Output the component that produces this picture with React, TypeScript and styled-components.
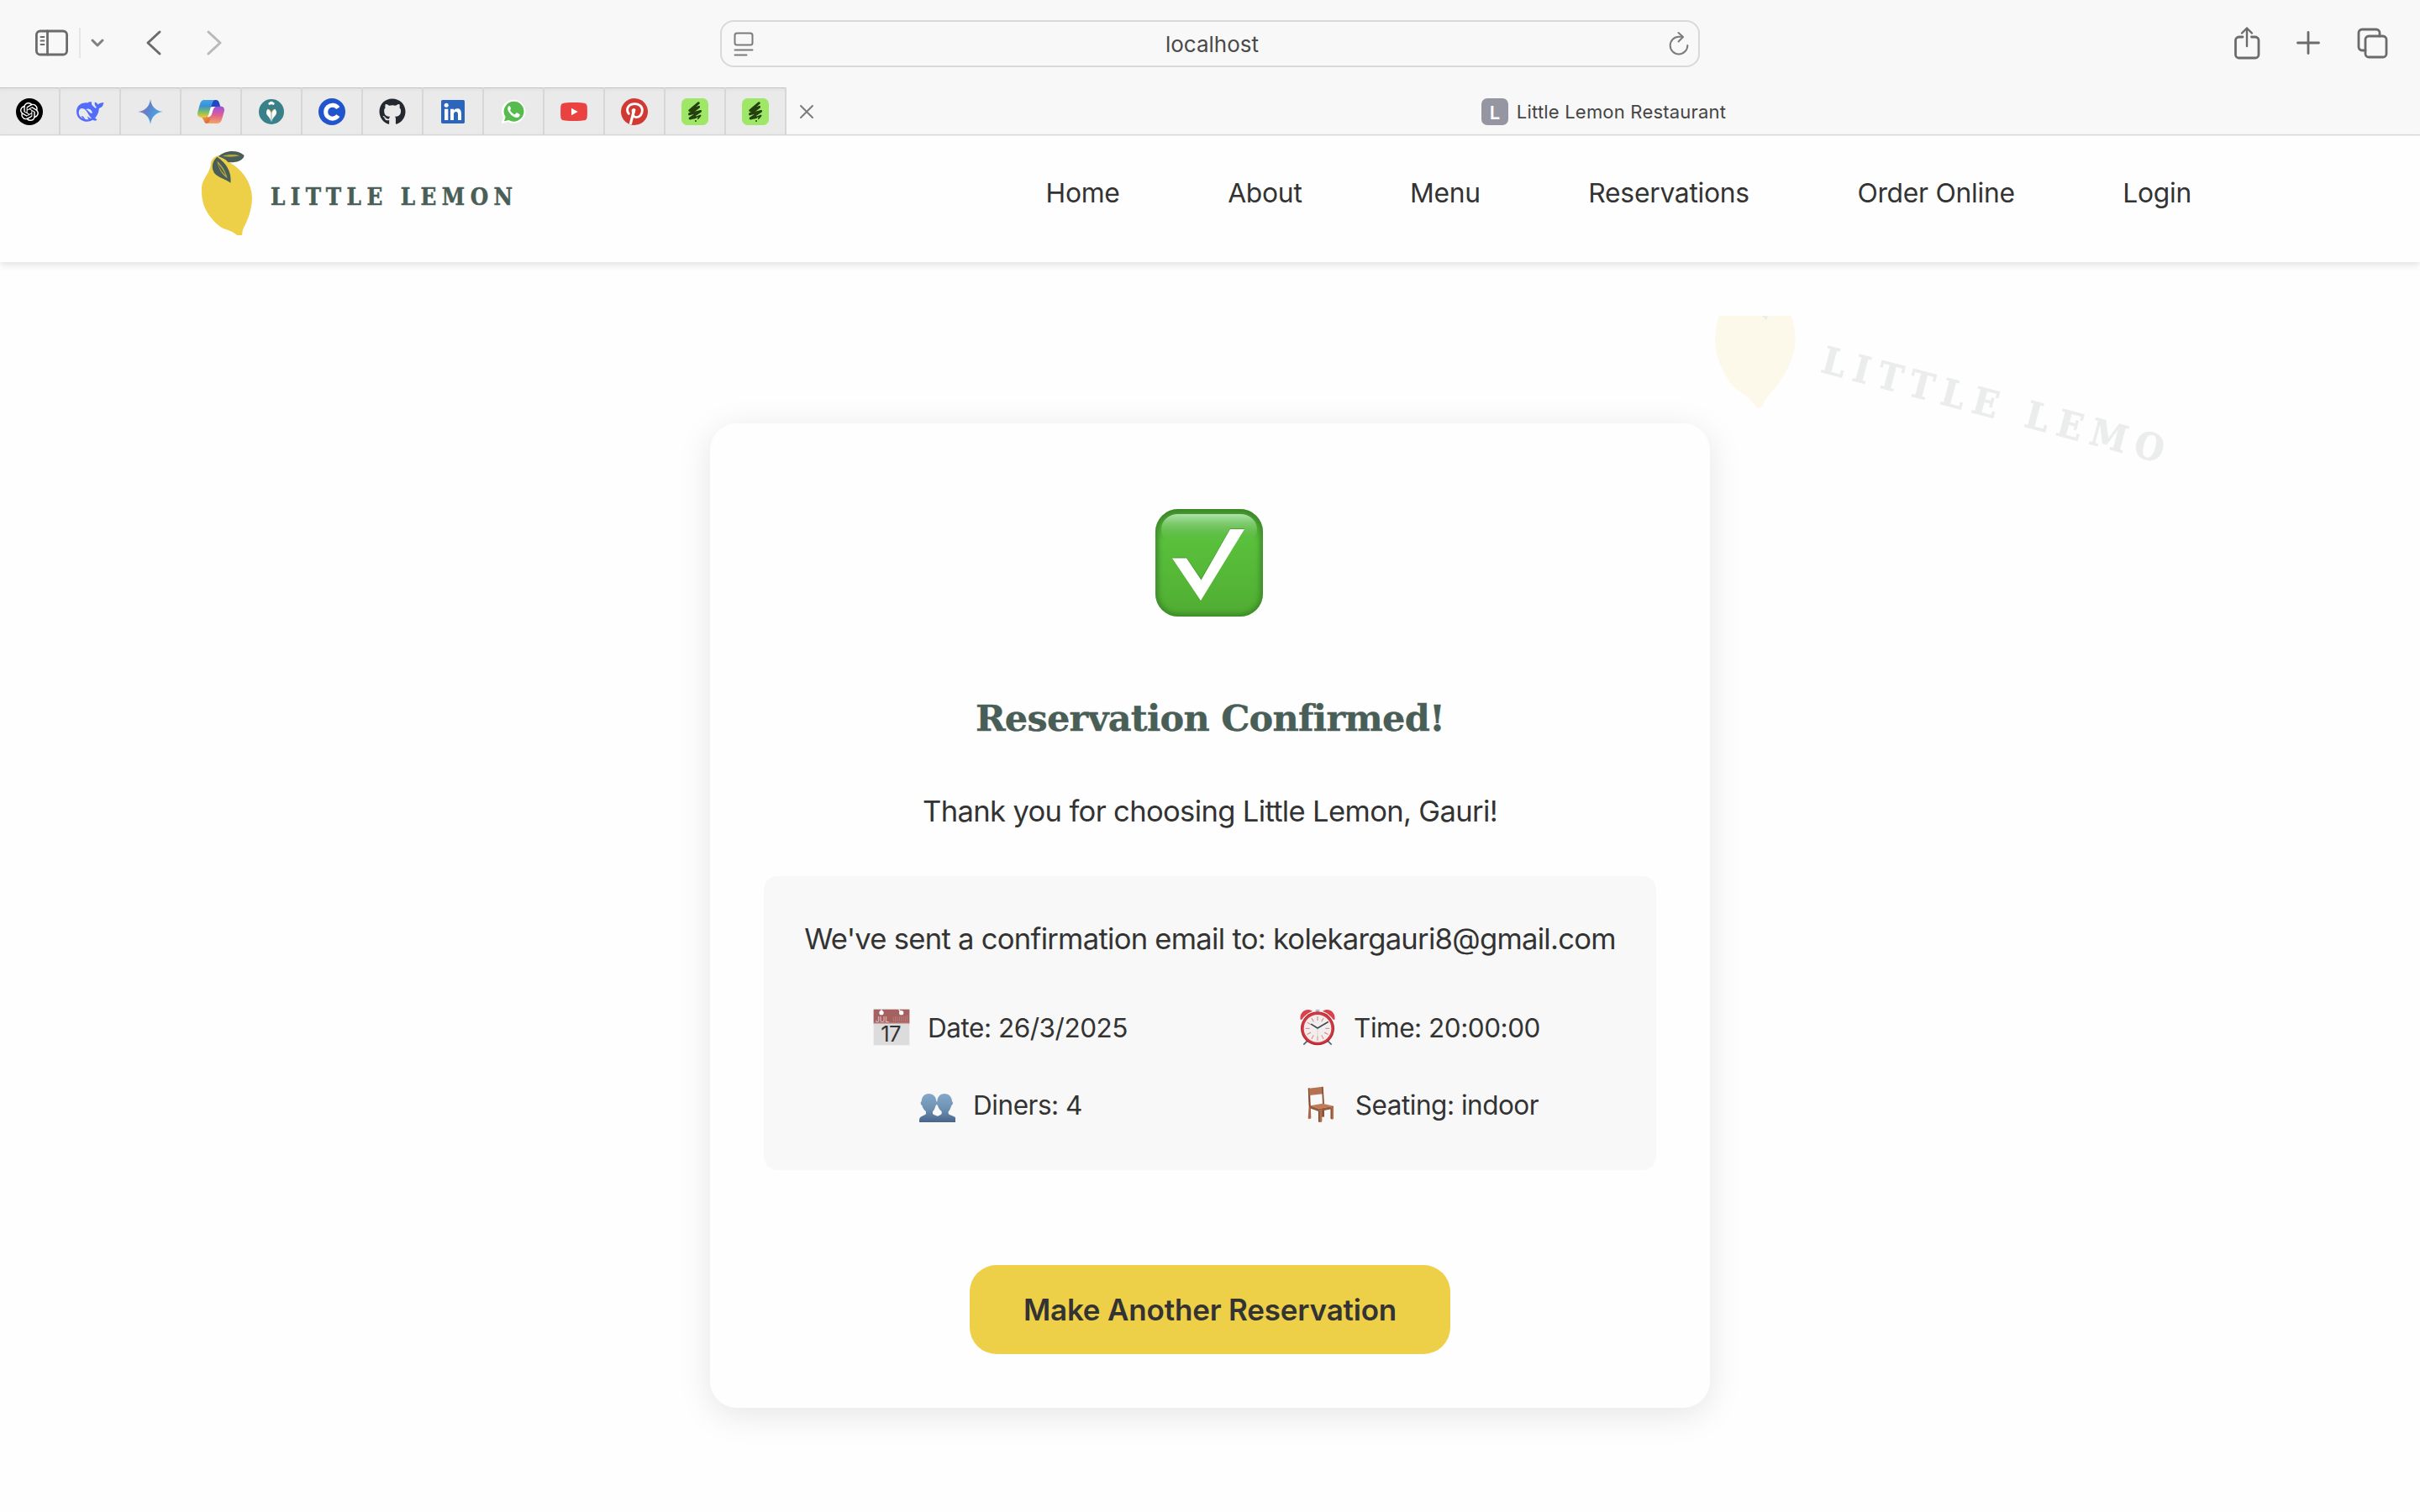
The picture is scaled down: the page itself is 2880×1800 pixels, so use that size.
import React from "react";
import styled, { createGlobalStyle } from "styled-components";
import { SiOpenai } from "react-icons/si";
import { FaGithub } from "react-icons/fa";

const sans = `Inter, "Liberation Sans", sans-serif`;
const serif = `"DejaVu Serif", serif`;
const serifCondensed = `"DejaVu Serif Condensed", "DejaVu Serif", serif`;
const yellow = "#edcf48";
const green = "#495e57";

const GlobalStyle = createGlobalStyle`
  *, *::before, *::after { box-sizing: border-box; }
  body { margin: 0; background: #fefefe; font-family: ${sans}; color: #333; }
  svg { display: block; flex: none; }
`;

const Window = styled.div`
  width: 2880px;
  height: 1800px;
  overflow: hidden;
  display: flex;
  flex-direction: column;
`;

/* ---------- browser chrome ---------- */

const Toolbar = styled.div`
  flex: none;
  height: 104px;
  padding: 0 38px;
  background: #f8f8f8;
  display: grid;
  grid-template-columns: 1fr 1166px 1fr;
`;

const ToolGroup = styled.div<{ $end?: boolean }>`
  height: 102px;
  display: flex;
  align-items: center;
  justify-content: ${(p) => (p.$end ? "flex-end" : "flex-start")};
`;

const ToolIcon = styled.svg<{ $gap?: number; $tone?: string }>`
  flex: none;
  margin-left: ${(p) => p.$gap ?? 0}px;
  fill: none;
  stroke: ${(p) => p.$tone ?? "#6b6b6b"};
  stroke-width: 2.8;
  stroke-linecap: round;
  stroke-linejoin: round;
`;

const Divider = styled.div`
  width: 2px;
  height: 36px;
  margin-left: 12px;
  background: #e6e6e6;
`;

const AddressBar = styled.div`
  height: 56px;
  margin-top: 24px;
  padding: 0 10px 0 13px;
  border: 2px solid #d9d9d9;
  border-radius: 16px;
  display: flex;
  align-items: center;
  justify-content: space-between;
`;

const Address = styled.span`
  padding: 2px 0 0 2px;
  font-size: 26px;
  line-height: 52px;
  color: #4a4a4a;
`;

const TabStrip = styled.div`
  flex: none;
  height: 57px;
  display: flex;
  background: #f8f8f8;
  border-bottom: 1px solid #d8d8d8;
`;

const PinnedTab = styled.div`
  width: 72px;
  padding-top: 1px;
  border-right: 2px solid #d7d7d7;
  background: #eaeaea;
  box-shadow: inset 0 1px 0 #c6c6c6, inset 0 5px 4px -3px #dadada;
  display: flex;
  align-items: center;
  justify-content: center;
`;

const ActiveTab = styled.div`
  position: relative;
  flex: 1;
  padding: 2px 0 0 1px;
  display: flex;
  align-items: center;
  justify-content: center;
  gap: 10px;
`;

const CloseMark = styled.svg`
  position: absolute;
  left: 15px;
  top: 20px;
  stroke: #7c7c7c;
  stroke-width: 2;
  stroke-linecap: round;
`;

const Favicon = styled.span`
  width: 32px;
  height: 32px;
  border-radius: 7px;
  background: #9596a2;
  color: #fff;
  font-size: 22px;
  font-weight: 600;
  line-height: 34px;
  text-align: center;
`;

const TabTitle = styled.span`
  font-size: 22px;
  letter-spacing: 0.2px;
  color: #454545;
`;

const RoundBadge = styled.span`
  width: 32px;
  height: 32px;
  border-radius: 50%;
  background: #000;
  color: #fff;
  display: flex;
  align-items: center;
  justify-content: center;
`;

const badges: React.ReactNode[] = [
  <RoundBadge>
    <SiOpenai size={22} />
  </RoundBadge>,
  <svg width="34" height="26" viewBox="0 0 100 74">
    <path
      fill="#536dfb"
      d="M4 28C9 12 24 4 42 6c4-5 12-4 14-3 0 4-1 7 2 11l10 10c3 1 5-1 5-4-6-3-7-9-6-17 5 1 9 4 11 9 6-5 13-6 20-7-1 11-7 19-16 20-1 16-7 26-14 34l7 6c-4 5-11 4-15 1C42 77 18 71 7 53 3 45 2 36 4 28z"
    />
    <path fill="#eaeaea" d="M11 38c1-12 9-16 18-11 12 7 16 24 27 33-5 1-9-2-14-7-1 5 2 8 4 11-18 3-36-8-35-26zM36 29c7-5 18-2 22 9 1 3-1 6-4 5-6-2-9-11-18-14z" />
    <path fill="#536dfb" d="M20 53c3-1 7 1 9 4l6 8c-7-2-12-6-15-12z" />
  </svg>,
  <svg width="30" height="30" viewBox="0 0 30 30">
    <defs>
      <linearGradient id="spark" x1="0" y1="0" x2="1" y2="0.4">
        <stop offset="0.15" stopColor="#9a6fb4" />
        <stop offset="0.5" stopColor="#5d83cc" />
        <stop offset="0.9" stopColor="#4aa6e6" />
      </linearGradient>
    </defs>
    <path fill="url(#spark)" d="M15 0c1 8.500 6 14 15 15-9 1-14 6.500-15 15-1-8.500-6-14-15-15C9 14 14 8.500 15 0z" />
  </svg>,
  <svg width="32" height="28" viewBox="0 0 96 84">
    <defs>
      <linearGradient id="cpLeft" x1="0" y1="0" x2="0" y2="1">
        <stop offset="0" stopColor="#3fa5ec" />
        <stop offset="0.35" stopColor="#3b8fd4" />
        <stop offset="0.7" stopColor="#7fbf62" />
        <stop offset="1" stopColor="#f2c63a" />
      </linearGradient>
      <linearGradient id="cpRight" x1="0" y1="0" x2="0" y2="1">
        <stop offset="0" stopColor="#9a50e0" />
        <stop offset="0.5" stopColor="#dd5f95" />
        <stop offset="1" stopColor="#f3a75c" />
      </linearGradient>
      <linearGradient id="cpFoot" x1="0" y1="0" x2="1" y2="1">
        <stop offset="0" stopColor="#f0b03c" />
        <stop offset="1" stopColor="#d8523c" />
      </linearGradient>
    </defs>
    <path fill="#2148c4" d="M48 0h18c7 0 10 4 12 11l4 13H60c-8 0-12 2-15 8z" />
    <path fill="url(#cpFoot)" d="M14 60h24l14-8-8 24c-2 6-6 8-11 8-6 0-9-5-11-12z" />
    <path fill="url(#cpLeft)" d="M24 0h42c-8 0-11 5-14 14L40 52c-3 8-7 10-13 10H12C2 62-2 54 1 43L9 14C12 5 16 0 24 0z" />
    <path fill="url(#cpRight)" d="M72 84H32c8 0 10-5 13-14l11-36c3-8 7-11 13-11h15c10 0 14 8 11 19l-8 28c-3 9-7 14-15 14z" />
    <path fill="#fff" opacity="0.92" d="M49 25h14c-4 2-6 6-8 12l-5 15c-3 7-6 9-15 10 3-2 4-5 5-9l5-18c1-5 2-8 4-10z" />
  </svg>,
  <svg width="30" height="30" viewBox="0 0 90 90">
    <circle cx="45" cy="45" r="45" fill="#398088" />
    <path fill="#fff" d="M34 17q-1-5 4-5 2-4 7-4t7 4q5 0 4 5l-3 4q-8-4-16 0zM45 52c-2-10-7-15-13-17-7 8-7 17 0 25 6 6 10 13 13 22 3-9 7-16 13-22 7-8 7-17 0-25-6 2-11 7-13 17z" />
    <path fill="#e5a23d" d="M32 35c8 0 11 5 13 13 2-8 5-13 13-13-7 4-9 9-13 14-4-5-6-10-13-14z" />
    <path stroke="#398088" strokeWidth="2" d="M45 50v30" />
  </svg>,
  <svg width="32" height="32" viewBox="0 0 96 96">
    <circle cx="48" cy="48" r="48" fill="#2155cd" />
    <path fill="none" stroke="#fff" strokeWidth="15" d="M70 35a24 24 0 1 0 0 27" />
  </svg>,
  <FaGithub size={32} color="#24292f" />,
  <svg width="28" height="28" viewBox="0 0 84 84">
    <rect width="84" height="84" rx="5" fill="#2b65bd" />
    <circle cx="18.500" cy="19" r="7.500" fill="#fff" />
    <path fill="#fff" d="M12 32h13v40H12zM33 32h12v6c3-5 7-7 13-7 11 0 14 8 14 18v23H60V52c0-6-1-10-7-10s-8 4-8 10v20H33z" />
  </svg>,
  <svg width="30" height="30" viewBox="0 0 90 90">
    <path fill="#fff" d="M46 2a42 42 0 1 1-20 79L2 88l7-23A42 42 0 0 1 46 2z" />
    <path fill="#57bb4e" d="M46 8a36 36 0 1 1-18 67l-16 4 5-15A36 36 0 0 1 46 8z" />
    <path
      fill="#fff"
      d="M34 24c-3-1-6 0-8 4-3 6-1 13 4 20 8 11 17 17 27 18 6 0 12-4 11-11 0-1-10-6-12-6s-4 6-6 6c-5-1-15-10-17-16 0-1 4-4 3-6-1-3-3-8-5-9z"
    />
  </svg>,
  <svg width="32" height="22" viewBox="0 0 96 66">
    <path fill="#ea4141" d="M12 2c20-3 52-3 72 0 7 1 10 4 11 11 1 14 1 26 0 40-1 7-4 10-11 11-20 3-52 3-72 0C5 63 2 60 1 53c-1-14-1-26 0-40C2 6 5 3 12 2z" />
    <path fill="#fff" d="M39 20v26l23-13z" />
  </svg>,
  <svg width="32" height="32" viewBox="0 0 96 96">
    <circle cx="48" cy="48" r="48" fill="#d13a32" />
    <path
      fill="none"
      stroke="#fff"
      strokeWidth="8.500"
      strokeLinecap="round"
      d="M28 55c-11-13-5-33 19-35 17-1 29 9 29 22 0 15-9 26-20 26-7 0-11-4-12-8"
    />
    <path fill="none" stroke="#fff" strokeWidth="9.500" d="M47 38c-2 14-7 28-13 55" />
    <path fill="#fff" d="M38 44c-1-8 12-10 14-3 0 5-3 11-4 16l-9-3z" />
  </svg>,
  <ScribbleIcon />,
  <ScribbleIcon />,
];

function ScribbleIcon() {
  return (
    <svg width="32" height="32" viewBox="0 0 96 96">
      <rect width="96" height="96" rx="20" fill="#9fe766" />
      <path
        fill="none"
        stroke="#24400f"
        strokeWidth="8.500"
        strokeLinecap="round"
        strokeLinejoin="round"
        d="M61 17L29 44 62 31 28 57 68 46 30 72 50 68"
      />
      <path fill="none" stroke="#24400f" strokeWidth="5" strokeLinecap="round" d="M46 70l23-9-10 12" />
      <circle cx="51" cy="81" r="3" fill="#24400f" />
    </svg>
  );
}

/* ---------- site header ---------- */

const Header = styled.header`
  position: relative;
  z-index: 2;
  flex: none;
  height: 151px;
  padding: 18px 272px 0 240px;
  border-top: 1px solid #efefef;
  background: #fefefe;
  box-shadow: 0 4px 8px rgba(0, 0, 0, 0.1);
  display: flex;
  justify-content: space-between;
  align-items: flex-start;
`;

const LogoBox = styled.div`
  flex: none;
  width: 370px;
  height: 100px;
  display: flex;
  align-items: flex-start;
`;

const LemonMark = styled.svg<{ $cropped?: boolean }>`
  overflow: ${(p) => (p.$cropped ? "hidden" : "visible")};
`;

const LogoText = styled.span`
  margin: 38px 0 0 22px;
  font: bold 27.400px/32px ${serifCondensed};
  letter-spacing: 6.500px;
  color: ${green};
  -webkit-text-stroke: 0.5px ${green};
  white-space: nowrap;
`;

const Nav = styled.nav`
  height: 99px;
  display: flex;
  align-items: center;
  gap: 128.500px;
`;

const NavLink = styled.a`
  font-size: 31.800px;
  font-weight: 440;
  letter-spacing: -0.260px;
  color: #333;
`;

function Logo({ cropped }: { cropped?: boolean }) {
  return (
    <LogoBox>
      <LemonMark $cropped={cropped} width="60" height="100" viewBox="0 0 180 300">
        <path
          fill={yellow}
          d="M62 15C42 20 32 32 32 52 26 82 2 100 0 130c-2 60 16 95 60 135 22 19 45 14 70 38 8 3 14 0 15-9 1-16 6-21 14-39 13-30 20-55 21-88-1-50-30-100-86-130z"
        />
        <path fill={green} d="M60 19C78 0 122-9 151 14c3 8-12 22-30 24-10 2-18 3-27 1-8-9-20-15-34-20z" />
        <path fill="#b5a63f" d="M74 17c18-6 42-7 62-1-18 5-42 5-62 1z" />
        <path fill={green} d="M55 20C36 38 34 60 45 78c12 15 38 21 58 35 4-32-8-66-48-93z" />
        <path fill="#b5a63f" d="M55 35c17 14 30 34 37 62-20-14-32-34-37-62z" />
        <path fill={green} d="M58 44c12 14 22 28 28 42-13-12-22-24-28-42z" />
      </LemonMark>
      <LogoText>LITTLE LEMON</LogoText>
    </LogoBox>
  );
}

/* ---------- confirmation page ---------- */

const Main = styled.main`
  position: relative;
  flex: 1;
  background: #fefefe;
  display: flex;
  justify-content: center;
  align-items: flex-start;
  padding-top: 192px;
`;

const WatermarkArea = styled.div`
  position: absolute;
  top: 64px;
  left: 300px;
  width: 2278px;
  height: 1300px;
  overflow: hidden;
  opacity: 0.1;
`;

const Watermark = styled.div`
  position: absolute;
  left: 1764px;
  top: -68px;
  transform: rotate(15deg) scale(1.62);
  transform-origin: 0 0;
`;

const Card = styled.section`
  position: relative;
  width: 1190px;
  height: 1172px;
  padding: 102px 64px 64px;
  border-radius: 32px;
  background: #fefefe;
  box-shadow: 0 8px 40px rgba(0, 0, 0, 0.1);
  display: flex;
  flex-direction: column;
  align-items: center;
`;

const CheckBox = styled.div`
  padding-right: 2px;
`;

const Title = styled.h1`
  margin: 87px 0 -1px;
  font: bold 43px/68px ${serif};
  font-variant-ligatures: none;
  letter-spacing: -0.750px;
  color: ${green};
  -webkit-text-stroke: 0.4px ${green};
`;

const Thanks = styled.p`
  margin: 47px 0 0;
  font-size: 34.600px;
  line-height: 60px;
  letter-spacing: -0.660px;
`;

const Details = styled.div`
  width: 1062px;
  height: 350px;
  margin-top: 48px;
  padding: 44px 48px 0;
  border-radius: 16px;
  background: #f8f8f8;
`;

const EmailLine = styled.p`
  margin: 0;
  font-size: 34.600px;
  line-height: 60px;
  letter-spacing: -0.720px;
  text-align: center;
  white-space: nowrap;
`;

const DetailGrid = styled.div`
  margin-top: 46px;
  display: grid;
  grid-template-columns: 1fr 1fr;
  grid-auto-rows: 60px;
  gap: 32px;
`;

const Detail = styled.div`
  display: flex;
  align-items: center;
  justify-content: center;
  gap: 21px;
  font-size: 31.500px;
  letter-spacing: -0.480px;
  white-space: nowrap;
`;

const Button = styled.button`
  width: 572px;
  height: 106px;
  margin-top: 113px;
  padding: 0;
  border: 0;
  border-radius: 32px;
  background: ${yellow};
  color: #333;
  font: 600 35px/106px ${sans};
  letter-spacing: -0.180px;
`;

function CheckEmoji() {
  return (
    <svg width="128" height="128" viewBox="0 0 128 128">
      <defs>
        <linearGradient id="ckBase" x1="0" y1="0" x2="0" y2="1">
          <stop offset="0" stopColor="#469a30" />
          <stop offset="0.3" stopColor="#59c03b" />
          <stop offset="1" stopColor="#50ad32" />
        </linearGradient>
        <linearGradient id="ckGloss" x1="0" y1="0" x2="0" y2="1">
          <stop offset="0" stopColor="#aee3ab" />
          <stop offset="1" stopColor="#59c23c" stopOpacity="0" />
        </linearGradient>
        <filter id="ckSoft" x="-10%" y="-10%" width="120%" height="120%">
          <feGaussianBlur stdDeviation="3" />
        </filter>
        <clipPath id="ckClip">
          <rect width="128" height="128" rx="27" />
        </clipPath>
      </defs>
      <g clipPath="url(#ckClip)">
        <rect width="128" height="128" fill="url(#ckBase)" />
        <rect x="0" y="0" width="128" height="128" rx="27" fill="none" stroke="#377f25" strokeWidth="6" filter="url(#ckSoft)" />
        <rect x="7" y="6" width="114" height="36" rx="20" fill="url(#ckGloss)" />
      </g>
      <path fill="#3d8a28" opacity="0.6" d="M20 57.500h17l17.500 25L89 23h17L54 108z" />
      <path fill="#fff" d="M20 58.500h17l17.500 26L89 24h17L54 109z" />
    </svg>
  );
}

function CalendarEmoji() {
  return (
    <svg width="44" height="44" viewBox="0 0 132 132">
      <rect x="2" y="2" width="128" height="128" fill="#dcdcdc" />
      <rect x="2" y="2" width="128" height="50" fill="#a56160" />
      <rect x="2" y="50" width="128" height="3" fill="#c9a9a8" />
      <circle cx="30" cy="14" r="8" fill="#fff" />
      <path stroke="#fff" strokeWidth="4" d="M30 2v10M92 2l8 11" />
      <circle cx="101" cy="14" r="8" fill="#fff" />
      <path stroke="#bd8382" strokeWidth="2.500" d="M73 46V30M80 46V27M87 46V28M94 46V25M101 46V27M108 46V24M115 46V26M122 46V22" />
      <text x="8" y="47" fontFamily={sans} fontSize="26" fill="#e6cfce" textLength="49">
        JUL
      </text>
      <text x="28" y="118" fontFamily={sans} fontSize="77" fill="#333" textLength="72">
        17
      </text>
    </svg>
  );
}

function PeopleEmoji() {
  const person =
    "M33 2c16 0 27 12 27 28 5 1 3 12-2 14-3 10-6 17-11 22v8c6 6 18 7 24 12 3 4 3 9 3 18H-1c0-9 0-14 4-18 6-5 15-6 20-12v-8C17 60 11 54 9 44 4 42 2 31 7 30 7 14 17 2 33 2z";
  return (
    <svg width="44" height="44" viewBox="0 0 132 132">
      <defs>
        <linearGradient id="ppl" x1="0" y1="0" x2="0" y2="1">
          <stop offset="0" stopColor="#83a8c9" />
          <stop offset="0.5" stopColor="#7093b4" />
          <stop offset="1" stopColor="#48658c" />
        </linearGradient>
      </defs>
      <path fill="url(#ppl)" transform="translate(60 25)" d={person} />
      <path fill="url(#ppl)" transform="translate(4 25)" d={person} />
    </svg>
  );
}

function ClockEmoji() {
  const ticks = Array.from({ length: 12 }, (_, i) => i * 30);
  return (
    <svg width="44" height="44" viewBox="0 0 132 132">
      <path stroke="#56626e" strokeWidth="5" d="M32 112l-16 16M100 112l16 16" />
      <rect x="59" y="2" width="14" height="9" rx="3" fill="#b3bcc6" />
      <path fill="#d9424c" d="M5 39C0 12 26-6 48 8 30 15 20 24 10 38zM127 39C132 12 106-6 84 8c18 7 28 16 38 30z" />
      <circle cx="66" cy="70" r="60" fill="#b3232c" />
      <circle cx="66" cy="69" r="57" fill="#cf3a42" />
      <circle cx="66" cy="70" r="49" fill="#efefef" />
      {ticks.map((a) => (
        <path key={a} stroke="#f0796f" strokeWidth="3" d="M66 27v15" transform={`rotate(${a} 66 70)`} />
      ))}
      <path stroke="#e8c890" strokeWidth="2" d="M66 68v44" />
      <path stroke="#3c4348" strokeWidth="4.500" strokeLinecap="round" d="M66 69L44 55M66 69l37-22" />
    </svg>
  );
}

function ChairEmoji() {
  return (
    <svg width="44" height="44" viewBox="0 0 132 132">
      <path fill="#8a5236" d="M75 84h9v26h-9z" />
      <path fill="#a9694a" d="M27 8l6-1 4 108-7 3-4-3 3-44z" />
      <path fill="#7c452d" d="M26 8l4-1 4 63-4 4z" />
      <path fill="#b57250" d="M29 8l50-6v26l-48 5z" />
      <path fill="#8a5236" d="M75 2l5 1 4 62-6-2z" />
      <path fill="#c07c55" d="M34 70l44-8 39 9-52 10z" />
      <path fill="#95593c" d="M34 70l31 11v10L32 79zM65 81l52-10v9l-52 11z" />
      <path fill="#b06f4b" d="M63 84h13v43l-6 3-7-3zM107 74h10v43l-5 2-5-3z" />
      <path fill="#7c452d" d="M63 88h4v41l-4-2zM107 80h3v38l-3-2z" />
    </svg>
  );
}

export default function App() {
  return (
    <Window>
      <GlobalStyle />
      <Toolbar>
        <ToolGroup>
          <ToolIcon width="42" height="34" viewBox="0 0 42 34" $gap={2}>
            <rect x="3.400" y="3" width="36.200" height="28" rx="4.500" />
            <path d="M16.500 3v28" />
            <path d="M8.500 10h4M8.500 14.500h4M8.500 19h4" strokeWidth="1.800" />
          </ToolIcon>
          <Divider />
          <ToolIcon width="18" height="14" viewBox="0 0 18 14" $gap={11} $tone="#7f7f84">
            <path d="M3 4l6 6 6-6" strokeWidth="3" />
          </ToolIcon>
          <ToolIcon width="20" height="32" viewBox="0 0 20 32" $gap={48}>
            <path d="M17 3L3 16l14 13" strokeWidth="3" />
          </ToolIcon>
          <ToolIcon width="20" height="32" viewBox="0 0 20 32" $gap={52} $tone="#b9b9b9">
            <path d="M3 3l14 13L3 29" strokeWidth="3" />
          </ToolIcon>
        </ToolGroup>
        <AddressBar>
          <ToolIcon width="26" height="30" viewBox="0 0 26 30" $tone="#7b7b7b">
            <rect x="2.500" y="2.500" width="21" height="14" rx="2.500" strokeWidth="2" />
            <path d="M2.500 22.500h21M2.500 28.500h14" strokeWidth="2" />
          </ToolIcon>
          <Address>localhost</Address>
          <ToolIcon width="26" height="30" viewBox="0 0 26 30" $tone="#7b7b7b">
            <path d="M17 6.800H13A10.300 10.300 0 1 0 23.300 17" strokeWidth="2" />
            <path d="M12.500 2l5.500 5-5.500 5.500" strokeWidth="2" />
          </ToolIcon>
        </AddressBar>
        <ToolGroup $end>
          <ToolIcon width="32" height="40" viewBox="0 0 32 40">
            <path d="M11 13H6.500A4 4 0 0 0 2.500 17v17a4 4 0 0 0 4 4h19.500a4 4 0 0 0 4-4V17a4 4 0 0 0-4-4H21.500" />
            <path d="M16 24V2.500M10 8.500l6-6 6 6" strokeWidth="2.400" />
          </ToolIcon>
          <ToolIcon width="30" height="30" viewBox="0 0 30 30" $gap={42}>
            <path d="M15 2.500v25M2.500 15h25" />
          </ToolIcon>
          <ToolIcon width="38" height="38" viewBox="0 0 38 38" $gap={42}>
            <path d="M11 28H7a4 4 0 0 1-4-4V7a4 4 0 0 1 4-4h17a4 4 0 0 1 4 4v4" />
            <rect x="11" y="11" width="25" height="25" rx="4" />
          </ToolIcon>
        </ToolGroup>
      </Toolbar>

      <TabStrip>
        {badges.map((icon, i) => (
          <PinnedTab key={i}>{icon}</PinnedTab>
        ))}
        <ActiveTab>
          <CloseMark width="18" height="18" viewBox="0 0 18 18">
            <path d="M2 2l14 14M16 2L2 16" />
          </CloseMark>
          <Favicon>L</Favicon>
          <TabTitle>Little Lemon Restaurant</TabTitle>
        </ActiveTab>
      </TabStrip>

      <Header>
        <Logo cropped />
        <Nav>
          {["Home", "About", "Menu", "Reservations", "Order Online", "Login"].map((label) => (
            <NavLink key={label}>{label}</NavLink>
          ))}
        </Nav>
      </Header>

      <Main>
        <WatermarkArea>
          <Watermark>
            <Logo />
          </Watermark>
        </WatermarkArea>
        <Card>
          <CheckBox>
            <CheckEmoji />
          </CheckBox>
          <Title>Reservation Confirmed!</Title>
          <Thanks>Thank you for choosing Little Lemon, Gauri!</Thanks>
          <Details>
            <EmailLine>We've sent a confirmation email to: kolekargauri8@gmail.com</EmailLine>
            <DetailGrid>
              <Detail>
                <CalendarEmoji />
                Date: 26/3/2025
              </Detail>
              <Detail>
                <ClockEmoji />
                Time: 20:00:00
              </Detail>
              <Detail>
                <PeopleEmoji />
                Diners: 4
              </Detail>
              <Detail>
                <ChairEmoji />
                Seating: indoor
              </Detail>
            </DetailGrid>
          </Details>
          <Button>Make Another Reservation</Button>
        </Card>
      </Main>
    </Window>
  );
}
